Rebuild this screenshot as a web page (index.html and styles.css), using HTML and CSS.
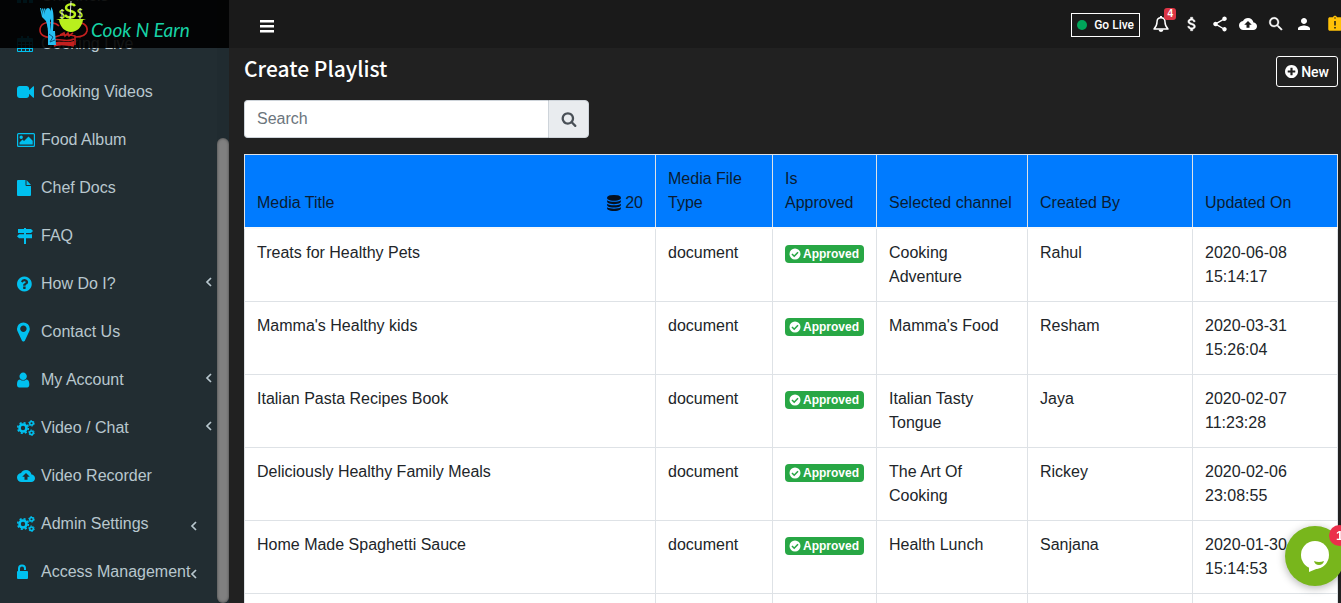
FILE: index.html
```html
<!DOCTYPE html>
<html lang="en">
  <head>
    <meta charset="UTF-8" />
    <meta name="viewport" content="width=device-width, initial-scale=1.0" />
    <title>Create Playlist</title>
    <link rel="stylesheet" href="styles.css">
  </head>
  <body>
    <!-- Icon sprite -->
    <svg class="sprite" aria-hidden="true">
      <symbol id="i-sitemap" viewBox="0 0 16 16"><path d="M6 1h4v4H9v2h5v4h2v4h-4v-4h1V8H9v3h1v4H6v-4h1V8H3v3h1v4H0v-4h2V7h5V5H6z"/></symbol>
      <symbol id="i-calendar" viewBox="0 0 16 16"><path fill-rule="evenodd" d="M1 2h3V0h2v2h4V0h2v2h3q1 0 1 1v12q0 1-1 1H1q-1 0-1-1V3q0-1 1-1zM1 6v2h3V6zm4 0v2h3V6zm4 0v2h3V6zm4 0v2h2V6zM1 9v3h3V9zm4 0v3h3V9zm4 0v3h3V9zm4 0v3h2V9zM1 13v2h3v-2zm4 0v2h3v-2zm4 0v2h3v-2zm4 0v2h2v-2z"/></symbol>
      <symbol id="i-video" viewBox="0 128 1792 1536"><path d="M1792 352v1088q0 42-39 59-13 5-25 5-27 0-45-19l-403-403v166q0 119-84.500 203.500t-203.500 84.500h-704q-119 0-203.500-84.500t-84.500-203.500v-704q0-119 84.500-203.500t203.500-84.500h704q119 0 203.500 84.500t84.500 203.500v165l403-402q18-19 45-19 12 0 25 5 39 17 39 59z"/></symbol>
      <symbol id="i-image" viewBox="0 0 18 16"><path fill-rule="evenodd" d="M1.500 1h15q1.500 0 1.500 1.500v11q0 1.500-1.500 1.500h-15Q0 15 0 13.500v-11Q0 1 1.500 1zm0 1.200q-.3 0-.3.3v11q0 .3.3.3h15q.3 0 .3-.3v-11q0-.3-.3-.3zM4.200 3.500a1.700 1.700 0 1 1 0 3.400 1.700 1.700 0 0 1 0-3.400zM2.500 12.600v-2l3-3L7 9l4.500-4.500 4.200 4.200v3.900z"/></symbol>
      <symbol id="i-file" viewBox="0 0 16 16"><path d="M1 0h7.500v5q0 1 1 1H14v9q0 1-1 1H1q-1 0-1-1V1q0-1 1-1zm8.500 0l4.500 5H9.500z"/></symbol>
      <symbol id="i-signs" viewBox="0 0 16 16"><path d="M7 0h2v1h5l2 2-2 2H9v1.200h6v4H9V16H7v-5.800H2l-2-2 2-2h5V5H1V1h6z"/></symbol>
      <symbol id="i-question" viewBox="128 64 1664 1664"><path d="M1024 1376v-192q0-14-9-23t-23-9h-192q-14 0-23 9t-9 23v192q0 14 9 23t23 9h192q14 0 23-9t9-23zm256-672q0-88-55.500-163t-138.500-116-170-41q-243 0-371 213-15 24 8 42l132 100q7 6 19 6 16 0 25-12 53-68 86-92 34-24 86-24 48 0 85.500 26t37.500 59q0 38-20 61t-68 45q-63 28-115.500 86.500t-52.500 125.500v36q0 14 9 23t23 9h192q14 0 23-9t9-23q0-19 21.500-49.500t54.500-49.500q32-18 49-28.500t46-35 44.500-48 28-60.500 12.500-81zm384 192q0 209-103 385.500t-279.500 279.500-385.500 103-385.500-103-279.500-279.500-103-385.500 103-385.500 279.500-279.500 385.500-103 385.500 103 279.500 279.500 103 385.500z"/></symbol>
      <symbol id="i-marker" viewBox="384 128 1280 1536"><path d="M1152 640q0-106-75-181t-181-75-181 75-75 181 75 181 181 75 181-75 75-181zm256 0q0 109-33 179l-364 774q-16 33-47.500 52t-67.500 19-67.500-19-46.500-52l-365-774q-33-70-33-179 0-212 150-362t362-150 362 150 150 362z"/></symbol>
      <symbol id="i-user" viewBox="256 64 1664 1664"><path d="M1536 1399q0 109-62.500 187t-150.500 78h-854q-88 0-150.500-78t-62.500-187q0-85 8.500-160.500t31.500-152 58.500-131 94-89 134.500-34.500q131 128 313 128t313-128q76 0 134.500 34.500t94 89 58.500 131 31.500 152 8.500 160.500zm-256-887q0 159-112.500 271.500t-271.500 112.500-271.500-112.500-112.500-271.500 112.500-271.500 271.500-112.500 271.500 112.500 112.500 271.500z"/></symbol>
      <symbol id="i-gears" viewBox="0 0 18 16">
        <g fill="none" stroke="currentColor">
          <circle cx="6" cy="8" r="3.500" stroke-width="2.600"/>
          <circle cx="6" cy="8" r="5.300" stroke-width="1.600" stroke-dasharray="2.080 2.080"/>
          <circle cx="14.500" cy="3.300" r="1.800" stroke-width="1.500"/>
          <circle cx="14.500" cy="3.300" r="2.800" stroke-width="1" stroke-dasharray="1.470 1.460"/>
          <circle cx="14.500" cy="12.700" r="1.800" stroke-width="1.500"/>
          <circle cx="14.500" cy="12.700" r="2.800" stroke-width="1" stroke-dasharray="1.470 1.460"/>
        </g>
      </symbol>
      <symbol id="i-cloud" viewBox="0 0 24 24"><path d="M19.350 10.040C18.670 6.590 15.640 4 12 4 9.110 4 6.600 5.640 5.350 8.040 2.340 8.360 0 10.910 0 14c0 3.310 2.690 6 6 6h13c2.760 0 5-2.240 5-5 0-2.640-2.050-4.780-4.650-4.960zM14 13v4h-4v-4H7l5-5 5 5h-3z"/></symbol>
      <symbol id="i-unlock" viewBox="0 0 16 16"><path d="M1 7V4.500a4 4 0 0 1 8 0V6H7V4.500a2 2 0 0 0-4 0V7h7q1 0 1 1v6q0 1-1 1H1q-1 0-1-1V8q0-1 1-1z"/></symbol>
      <symbol id="i-angle" viewBox="0 0 8 12"><path d="M6 2L2 6l4 4" fill="none" stroke="currentColor" stroke-width="1.700"/></symbol>
      <symbol id="i-bars" viewBox="0 0 14 14"><path d="M0 1h14v2.500H0zm0 5h14v2.500H0zm0 5h14v2.500H0z"/></symbol>
      <symbol id="i-bell" viewBox="0 0 18 18"><path d="M2 14c2-2 3-3.500 3-7 0-2.500 1.500-4.200 4-4.200S13 4.500 13 7c0 3.500 1 5 3 7z" fill="none" stroke="currentColor" stroke-width="1.500" stroke-linejoin="round"/><path d="M8 1h2v2H8zM6.500 14.500h5a2.500 2.500 0 0 1-5 0z"/></symbol>
      <symbol id="i-money" viewBox="0 0 24 24"><path d="M11.800 10.900c-2.270-.59-3-1.200-3-2.150 0-1.090 1.010-1.850 2.700-1.850 1.780 0 2.440.85 2.500 2.100h2.210c-.07-1.720-1.120-3.300-3.210-3.810V3h-3v2.160c-1.940.42-3.500 1.680-3.500 3.610 0 2.310 1.910 3.460 4.700 4.130 2.500.6 3 1.480 3 2.410 0 .69-.49 1.790-2.700 1.790-2.060 0-2.870-.92-2.980-2.100h-2.200c.12 2.190 1.760 3.420 3.680 3.830V21h3v-2.150c1.950-.37 3.500-1.500 3.500-3.550 0-2.840-2.430-3.810-4.700-4.400z" stroke="currentColor" stroke-width=".6"/></symbol>
      <symbol id="i-share" viewBox="0 0 24 24"><path d="M18 16.080c-.76 0-1.440.3-1.960.77L8.910 12.700c.05-.23.09-.46.09-.7s-.04-.47-.09-.7l7.050-4.110c.54.5 1.250.81 2.040.81 1.660 0 3-1.340 3-3s-1.340-3-3-3-3 1.340-3 3c0 .24.04.47.09.7L8.040 9.810C7.500 9.310 6.790 9 6 9c-1.660 0-3 1.340-3 3s1.340 3 3 3c.79 0 1.500-.31 2.040-.81l7.120 4.160c-.05.21-.08.43-.08.65 0 1.610 1.310 2.920 2.920 2.920s2.920-1.310 2.920-2.920-1.310-2.920-2.920-2.920z"/></symbol>
      <symbol id="i-find" viewBox="0 0 24 24"><path d="M15.500 14h-.79l-.28-.27C15.410 12.590 16 11.110 16 9.500 16 5.910 13.090 3 9.500 3S3 5.910 3 9.500 5.910 16 9.500 16c1.610 0 3.090-.59 4.230-1.570l.27.28v.79l5 4.990L20.490 19l-4.990-5zm-6 0C7.010 14 5 11.990 5 9.500S7.010 5 9.500 5 14 7.010 14 9.500 11.990 14 9.500 14z" stroke="currentColor" stroke-width=".5"/></symbol>
      <symbol id="i-person" viewBox="0 0 24 24"><path d="M12 12c2.210 0 4-1.790 4-4s-1.790-4-4-4-4 1.790-4 4 1.790 4 4 4zm0 2c-2.670 0-8 1.340-8 4v2h16v-2c0-2.660-5.330-4-8-4z"/></symbol>
      <symbol id="i-late" viewBox="0 0 24 24"><path d="M19 3h-4.180C14.400 1.840 13.300 1 12 1s-2.400.84-2.820 2H5c-1.100 0-2 .9-2 2v14c0 1.100.9 2 2 2h14c1.100 0 2-.9 2-2V5c0-1.100-.9-2-2-2zm-6 15h-2v-2h2zm0-4h-2V8h2zm-1-9c-.55 0-1-.45-1-1s.45-1 1-1 1 .45 1 1-.45 1-1 1z"/></symbol>
      <symbol id="i-search" viewBox="0 0 1792 1792"><path d="M1216 832q0-185-131.500-316.500t-316.500-131.500-316.500 131.500-131.500 316.500 131.500 316.500 316.500 131.500 316.500-131.500 131.500-316.500zm512 832q0 52-38 90t-90 38q-54 0-90-38l-343-342q-179 124-399 124-143 0-273.500-55.500t-225-150-150-225-55.500-273.500 55.500-273.500 150-225 225-150 273.500-55.500 273.500 55.500 225 150 150 225 55.500 273.500q0 220-124 399l343 343q37 37 37 90z"/></symbol>
      <symbol id="i-database" viewBox="0 0 1792 1792"><path d="M896 768q237 0 443-43t325-127v170q0 69-103 128t-280 93.500-385 34.500-385-34.500-280-93.500-103-128v-170q119 84 325 127t443 43zm0 768q237 0 443-43t325-127v170q0 69-103 128t-280 93.500-385 34.500-385-34.500-280-93.500-103-128v-170q119 84 325 127t443 43zm0-384q237 0 443-43t325-127v170q0 69-103 128t-280 93.500-385 34.500-385-34.500-280-93.500-103-128v-170q119 84 325 127t443 43zm0-1152q208 0 385 34.500t280 93.500 103 128v128q0 69-103 128t-280 93.500-385 34.500-385-34.500-280-93.500-103-128v-128q0-69 103-128t280-93.500 385-34.500z"/></symbol>
      <symbol id="i-plus" viewBox="128 128 1536 1536"><path d="M1344 960v-128q0-26-19-45t-45-19h-256v-256q0-26-19-45t-45-19h-128q-26 0-45 19t-19 45v256h-256q-26 0-45 19t-19 45v128q0 26 19 45t45 19h256v256q0 26 19 45t45 19h128q26 0 45-19t19-45v-256h256q26 0 45-19t19-45zm320-64q0 209-103 385.500t-279.500 279.500-385.500 103-385.500-103-279.500-279.500-103-385.500 103-385.500 279.500-279.500 385.500-103 385.500 103 279.500 279.500 103 385.500z"/></symbol>
      <symbol id="i-check" viewBox="0 0 12 12"><circle cx="6" cy="6" r="5.500"/><path d="M3 6l2.200 2.200L9 4.300" fill="none" stroke="#28a745" stroke-width="1.600"/></symbol>
    </svg>

    <aside class="sidebar">
      <a class="brand" href="#">
        <svg class="brand-mark" viewBox="0 0 50 48" aria-hidden="true">
          <!-- chef hat -->
          <g fill="none" stroke="#c4201f" stroke-width="1.600">
            <path d="M13 37c-7 1-12-2-12-7s5-9 12-7q4 0 7 3M35 23c8-2 14 2 13 8-1 5-6 6-12 6"/>
            <path d="M21 35l4-2 1 3 3-3 1 3 4-3M16 37c7-3 13-3 20-1v9M14 40c7-2 13 3 21-1M15 46c7-3 13-2 20 0"/>
          </g>
          <path d="M17 42c6-1 12 1 18-1v4c-6 2-12-1-18 1z" fill="#c4201f"/>
          <!-- bowl and dollar signs -->
          <path d="M17 19h30l-3 1c-1 7-6 12-12 12s-11-5-12-12z" fill="#b9ef1d"/>
          <path d="M36 6c-2-3-9-2-9 2s9 2 9 6-7 5-10 1" fill="none" stroke="#b9ef1d" stroke-width="2.400"/>
          <path d="M25 11c-1-1-4-1-4 1s4 1 4 4-3 2-4 1M43 10c-1-1-4-1-4 1s4 1 4 4-3 2-4 1" fill="none" stroke="#b9ef1d" stroke-width="1.500"/>
          <path d="M32 1l-1 18M23 9v10M41 8v11" stroke="#eee" stroke-width=".9"/>
          <!-- cutlery -->
          <g fill="#27bff2">
            <ellipse cx="9" cy="15" rx="3.500" ry="7"/>
            <path d="M8 20h3l1 12H9z"/>
            <path d="M12 7c3 3 3 12 2 24h-2zM1 8l2 9 4 4 3 11h2L8 18 6 8l-1 1 1 6-2-7-1 1 1 6-2-7z"/>
            <path d="M9 31h7l1 14H9z"/>
          </g>
          <path d="M10 34l4 3-3 5 5-2" fill="none" stroke="#0c4f7a"/>
        </svg>
        <span>Cook N Earn</span>
      </a>
      <ul class="menu">
        <li><a href="#"><svg><use href="#i-sitemap"/></svg><span>Channels</span></a></li>
        <li><a href="#"><svg><use href="#i-calendar"/></svg><span>Cooking Live</span></a></li>
        <li><a href="#"><svg class="mid"><use href="#i-video"/></svg><span>Cooking Videos</span></a></li>
        <li><a href="#"><svg class="wide"><use href="#i-image"/></svg><span>Food Album</span></a></li>
        <li><a href="#"><svg><use href="#i-file"/></svg><span>Chef Docs</span></a></li>
        <li><a href="#"><svg><use href="#i-signs"/></svg><span>FAQ</span></a></li>
        <li><a href="#"><svg><use href="#i-question"/></svg><span>How Do I?</span><svg class="arrow"><use href="#i-angle"/></svg></a></li>
        <li><a href="#"><svg class="tall"><use href="#i-marker"/></svg><span>Contact Us</span></a></li>
        <li><a href="#"><svg><use href="#i-user"/></svg><span>My Account</span><svg class="arrow"><use href="#i-angle"/></svg></a></li>
        <li><a href="#"><svg class="wide"><use href="#i-gears"/></svg><span>Video / Chat</span><svg class="arrow"><use href="#i-angle"/></svg></a></li>
        <li><a href="#"><svg class="wide"><use href="#i-cloud"/></svg><span>Video Recorder</span></a></li>
        <li class="admin"><a href="#"><svg class="wide"><use href="#i-gears"/></svg><span>Admin Settings</span><svg class="arrow"><use href="#i-angle"/></svg></a></li>
        <li class="admin"><a href="#"><svg><use href="#i-unlock"/></svg><span>Access Management</span><svg class="arrow"><use href="#i-angle"/></svg></a></li>
      </ul>
      <div class="scroll-track"><div class="scroll-thumb"></div></div>
    </aside>

    <div class="page">
      <header class="topbar">
        <button class="toggle" aria-label="Toggle menu"><svg><use href="#i-bars"/></svg></button>
        <a class="go-live" href="#"><i class="dot"></i>Go Live</a>
        <nav class="tools">
          <a href="#" class="alerts" aria-label="Notifications"><svg><use href="#i-bell"/></svg><span class="count">4</span></a>
          <a href="#" aria-label="Earnings"><svg><use href="#i-money"/></svg></a>
          <a href="#" aria-label="Share"><svg><use href="#i-share"/></svg></a>
          <a href="#" aria-label="Upload"><svg><use href="#i-cloud"/></svg></a>
          <a href="#" aria-label="Find"><svg><use href="#i-find"/></svg></a>
          <a href="#" aria-label="Profile"><svg><use href="#i-person"/></svg></a>
          <a href="#" class="late" aria-label="Pending"><svg><use href="#i-late"/></svg></a>
        </nav>
      </header>

      <main class="content">
        <div class="title-row">
          <h1>Create Playlist</h1>
          <button class="btn-new"><svg><use href="#i-plus"/></svg>New</button>
        </div>

        <form class="search">
          <input type="text" placeholder="Search" aria-label="Search" />
          <button type="button" aria-label="Run search"><svg><use href="#i-search"/></svg></button>
        </form>

        <table class="playlist">
          <colgroup>
            <col />
            <col class="col-type" />
            <col class="col-approved" />
            <col class="col-channel" />
            <col class="col-author" />
            <col class="col-date" />
          </colgroup>
          <thead>
            <tr>
              <th><div class="th-title">Media Title <span class="total"><svg><use href="#i-database"/></svg>20</span></div></th>
              <th>Media File Type</th>
              <th>Is Approved</th>
              <th>Selected channel</th>
              <th>Created By</th>
              <th>Updated On</th>
            </tr>
          </thead>
          <tbody>
            <tr>
              <td>Treats for Healthy Pets</td>
              <td>document</td>
              <td><span class="badge"><svg><use href="#i-check"/></svg>Approved</span></td>
              <td>Cooking Adventure</td>
              <td>Rahul</td>
              <td>2020-06-08 15:14:17</td>
            </tr>
            <tr>
              <td>Mamma's Healthy kids</td>
              <td>document</td>
              <td><span class="badge"><svg><use href="#i-check"/></svg>Approved</span></td>
              <td>Mamma's Food</td>
              <td>Resham</td>
              <td>2020-03-31 15:26:04</td>
            </tr>
            <tr>
              <td>Italian Pasta Recipes Book</td>
              <td>document</td>
              <td><span class="badge"><svg><use href="#i-check"/></svg>Approved</span></td>
              <td>Italian Tasty Tongue</td>
              <td>Jaya</td>
              <td>2020-02-07 11:23:28</td>
            </tr>
            <tr>
              <td>Deliciously Healthy Family Meals</td>
              <td>document</td>
              <td><span class="badge"><svg><use href="#i-check"/></svg>Approved</span></td>
              <td>The Art Of Cooking</td>
              <td>Rickey</td>
              <td>2020-02-06 23:08:55</td>
            </tr>
            <tr>
              <td>Home Made Spaghetti Sauce</td>
              <td>document</td>
              <td><span class="badge"><svg><use href="#i-check"/></svg>Approved</span></td>
              <td>Health Lunch</td>
              <td>Sanjana</td>
              <td>2020-01-30 15:14:53</td>
            </tr>
            <tr>
              <td></td>
              <td></td>
              <td></td>
              <td></td>
              <td></td>
              <td></td>
            </tr>
          </tbody>
        </table>
      </main>
    </div>

    <button class="chat" aria-label="Open chat">
      <svg viewBox="0 0 30 32"><circle cx="15" cy="15" r="14" fill="#fff"/><path d="M9 26v6l12-5z" fill="#fff"/><path d="M14 21q5 2 10 0-1 4-5 4-4 0-5-4z" fill="#78b61c"/></svg>
      <span class="chat-count">1</span>
    </button>
  </body>
</html>
```

FILE: styles.css
```css
* {
  margin: 0;
  padding: 0;
  box-sizing: border-box;
}

body {
  display: flex;
  height: 100vh;
  overflow: hidden;
  font-family: "Liberation Sans", Arial, sans-serif;
  font-size: 16px;
  line-height: 24px;
  background-color: #212121;
  color: #212529;
}

a {
  color: inherit;
  text-decoration: none;
}

svg {
  fill: currentColor;
  flex-shrink: 0;
}

button {
  font: inherit;
  cursor: pointer;
}

.sprite {
  position: absolute;
  width: 0;
  height: 0;
}

/* Sidebar */
.sidebar {
  position: relative;
  display: flex;
  align-items: flex-end;
  width: 229px;
  height: 100vh;
  flex-shrink: 0;
  overflow: hidden;
  background-color: #222d32;
}

.brand {
  position: absolute;
  top: 0;
  left: 0;
  z-index: 1;
  display: flex;
  align-items: center;
  width: 100%;
  height: 48px;
  padding-left: 39px;
  background-color: rgba(0, 0, 0, 0.9);
  color: #17d3a6;
  font-family: Lato, sans-serif;
  font-style: italic;
  font-size: 19px;
}

.brand span {
  padding-top: 12px;
}

.brand-mark {
  width: 50px;
  height: 48px;
  margin-right: 2px;
}

.menu {
  flex: 1;
  padding-bottom: 7px;
  list-style: none;
  color: #b8c7ce;
}

.menu a {
  display: flex;
  align-items: center;
  height: 48px;
  padding: 0 4px 0 17px;
  white-space: nowrap;
}

.menu svg {
  width: 16px;
  height: 16px;
  margin-right: 8px;
  color: #00c0ef;
}

.menu .mid {
  width: 17px;
  margin-right: 7px;
}

.menu .wide {
  width: 18px;
  height: 18px;
  margin-right: 6px;
}

.menu .tall {
  height: 20px;
}

.menu .arrow {
  width: 8px;
  height: 12px;
  margin: 0 0 4px auto;
  color: #b8c7ce;
}

.menu .admin a {
  padding-right: 19px;
}

.menu .admin .arrow {
  margin: 4px 0 0 auto;
}

.scroll-track {
  display: flex;
  width: 12px;
  height: 100%;
  padding-top: 138px;
  background-color: #202b30;
}

.scroll-thumb {
  flex: 1;
  border-radius: 6px;
  background-color: #808080;
  box-shadow: inset 0 0 3px rgba(0, 0, 0, 0.5);
}

/* Top bar */
.page {
  flex: 1;
  min-width: 0;
}

.topbar {
  display: flex;
  align-items: center;
  height: 48px;
  padding-left: 31px;
  background-color: #1a1a1a;
  color: #fff;
}

.toggle {
  display: flex;
  margin-top: 4px;
  border: none;
  background: none;
  color: #fff;
}

.toggle svg {
  width: 14px;
  height: 14px;
}

.go-live {
  display: flex;
  align-items: center;
  gap: 7px;
  height: 24px;
  margin-top: 1px;
  margin-left: auto;
  padding: 0 5px;
  border: 1px solid #fff;
  font-family: Roboto, sans-serif;
  font-size: 12px;
  font-weight: 500;
}

.dot {
  width: 10px;
  height: 10px;
  border-radius: 50%;
  background-color: #00a65a;
}

.tools {
  display: flex;
  margin: 0 -8px 0 7px;
}

.tools a {
  position: relative;
  display: flex;
  justify-content: center;
  width: 28px;
}

.tools svg {
  width: 18px;
  height: 18px;
}

.tools .alerts {
  margin-right: 3px;
}

.count {
  position: absolute;
  top: -7px;
  right: -1px;
  padding: 0 3px;
  border-radius: 3px;
  background-color: #dc3545;
  font-size: 10px;
  font-weight: bold;
  line-height: 12px;
}

.tools .late {
  margin-left: 3px;
  color: #ffc107;
}

/* Content */
.content {
  padding: 8px 3px 0 15px;
}

.title-row {
  display: flex;
  align-items: flex-start;
  justify-content: space-between;
  height: 31px;
  margin-bottom: 13px;
}

h1 {
  color: #fff;
  font-family: "Noto Sans CJK SC", sans-serif;
  font-size: 21px;
  font-weight: 500;
  line-height: 24px;
}

.btn-new {
  display: flex;
  align-items: center;
  gap: 3px;
  height: 31px;
  padding: 0 8px;
  border: 1px solid #fff;
  border-radius: 3px;
  background: none;
  color: #fff;
  font-family: Roboto, sans-serif;
  font-size: 14px;
  font-weight: 500;
}

.btn-new svg {
  width: 13px;
  height: 13px;
}

.search {
  display: flex;
  width: 345px;
  max-width: 100%;
  height: 38px;
  margin-bottom: 16px;
}

.search input {
  flex: 1;
  min-width: 0;
  padding: 0 12px;
  border: 1px solid #ced4da;
  border-right: none;
  border-radius: 4px 0 0 4px;
  font: inherit;
}

.search input::placeholder {
  color: #6c757d;
}

.search button {
  display: flex;
  align-items: center;
  justify-content: center;
  width: 41px;
  border: 1px solid #ced4da;
  border-radius: 0 4px 4px 0;
  background-color: #e9ecef;
  color: #495057;
}

.search svg {
  width: 16px;
  height: 16px;
}

/* Playlist table */
.playlist {
  width: 100%;
  table-layout: fixed;
  border-collapse: collapse;
  background-color: #fff;
}

.col-type {
  width: 117px;
}

.col-approved {
  width: 104px;
}

.col-channel {
  width: 151px;
}

.col-author {
  width: 165px;
}

.col-date {
  width: 145px;
}

.playlist th,
.playlist td {
  height: 73px;
  padding: 12px;
  border: 1px solid #dee2e6;
  text-align: left;
  vertical-align: top;
}

.playlist th {
  border-bottom: 2px solid #f8f9fa;
  background-color: #007bff;
  color: #0a1c33;
  font-weight: normal;
  vertical-align: bottom;
}

.th-title {
  display: flex;
  justify-content: space-between;
}

.total {
  display: flex;
  align-items: center;
  gap: 3px;
}

.total svg {
  width: 16px;
  height: 16px;
  color: #05101f;
}

.badge {
  display: flex;
  align-items: center;
  gap: 2px;
  height: 18px;
  margin-top: 4px;
  padding: 0 4px;
  border-radius: 4px;
  background-color: #28a745;
  color: #fff;
  font-size: 12px;
  font-weight: bold;
}

.badge svg {
  width: 12px;
  height: 12px;
}

/* Chat bubble */
.chat {
  position: fixed;
  right: -4px;
  bottom: 17px;
  display: flex;
  align-items: center;
  justify-content: center;
  width: 60px;
  height: 60px;
  border: none;
  border-radius: 50%;
  background-color: #78b61c;
  box-shadow: 0 2px 8px rgba(0, 0, 0, 0.3);
}

.chat svg {
  width: 30px;
  height: 32px;
}

.chat-count {
  position: absolute;
  top: -1px;
  right: -5px;
  width: 21px;
  height: 21px;
  border-radius: 50%;
  background-color: #eb2f4b;
  color: #fff;
  font-size: 13px;
  font-weight: bold;
  line-height: 21px;
  text-align: center;
}
```
